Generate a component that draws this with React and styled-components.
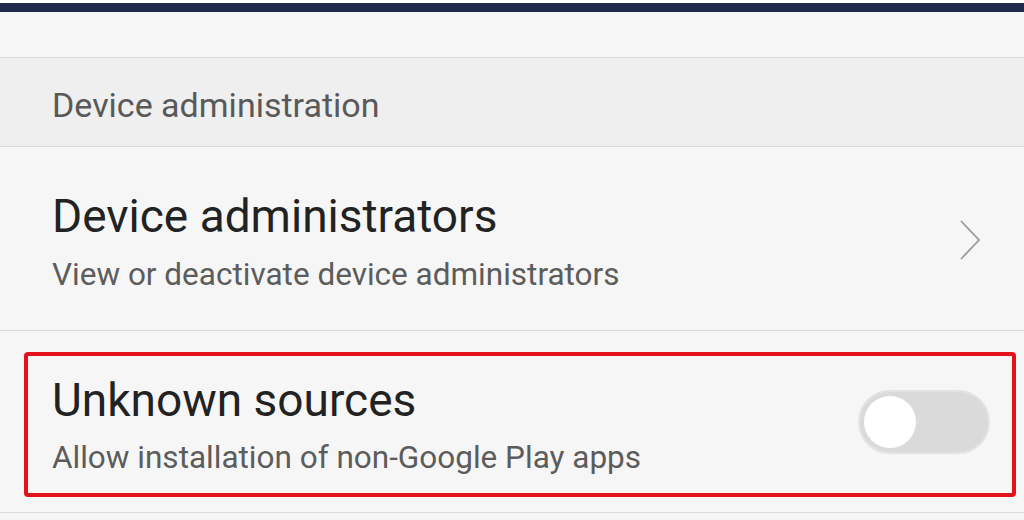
import React from "react";
import styled, { createGlobalStyle } from "styled-components";

const Global = createGlobalStyle`
  html, body { margin: 0; padding: 0; background: #f6f6f6; }
  body { font-family: Roboto, "Noto Sans", sans-serif; width: 1024px; height: 520px; overflow: hidden; }
`;

const Page = styled.div`
  display: flex;
  flex-direction: column;
  width: 1024px;
`;

const StatusBar = styled.div`
  height: 9px;
  border-top: 3px solid #ffffff;
  background: #1f2a4b;
`;

const Spacer = styled.div`
  height: 45px;
  border-bottom: 1px solid #d9d9d9;
`;

const SectionHeader = styled.div`
  height: 89px;
  background: #efefef;
  border-bottom: 1px solid #d9d9d9;
  display: flex;
  align-items: center;
  padding: 6px 0 0 52px;
  font-size: 34px;
  line-height: 40px;
  color: #595959;
  box-sizing: border-box;
`;

const Row = styled.div`
  height: ${(p) => p.$h}px;
  box-sizing: border-box;
  border-bottom: 1px solid #d9d9d9;
  display: flex;
  padding: ${(p) => p.$pad};
`;

const Highlight = styled.div`
  flex: 1;
  display: flex;
  align-items: flex-start;
  border: 4px solid #e3121b;
  border-radius: 4px;
  padding: 18px 22px 0 24px;
`;

const Plain = styled.div`
  flex: 1;
  display: flex;
  align-items: flex-start;
  padding: 43px 42px 0 52px;
`;

const Texts = styled.div`
  flex: 1;
  display: flex;
  flex-direction: column;
`;

const Title = styled.div`
  font-size: 46px;
  line-height: 52px;
  color: #222222;
`;

const Summary = styled.div`
  font-size: 31.5px;
  line-height: 40px;
  color: #5c5c5c;
  margin-top: ${(p) => p.$gap}px;
`;

const Chevron = styled.svg`
  width: 24px;
  height: 42px;
  flex: none;
  margin-top: 29px;
`;

const Track = styled.div`
  width: 132px;
  height: 64px;
  border-radius: 32px;
  background: #dadada;
  box-sizing: border-box;
  border: 2px solid #e3e3e3;
  display: flex;
  align-items: center;
  padding-left: 4px;
  flex: none;
  margin-top: 16px;
`;

const Thumb = styled.div`
  width: 52px;
  height: 52px;
  border-radius: 50%;
  background: #ffffff;
`;

export default function App() {
  return (
    <Page>
      <Global />
      <StatusBar />
      <Spacer />
      <SectionHeader>Device administration</SectionHeader>
      <Row $h={184} $pad="0">
        <Plain>
          <Texts>
            <Title>Device administrators</Title>
            <Summary $gap={13}>View or deactivate device administrators</Summary>
          </Texts>
          <Chevron viewBox="0 0 24 42">
            <path d="M3 2 L21 21 L3 40" fill="none" stroke="#9a9a9a" strokeWidth="1.8" />
          </Chevron>
        </Plain>
      </Row>
      <Row $h={182} $pad="21px 8px 15px 24px">
        <Highlight>
          <Texts>
            <Title>Unknown sources</Title>
            <Summary $gap={12}>Allow installation of non-Google Play apps</Summary>
          </Texts>
          <Track>
            <Thumb />
          </Track>
        </Highlight>
      </Row>
    </Page>
  );
}
